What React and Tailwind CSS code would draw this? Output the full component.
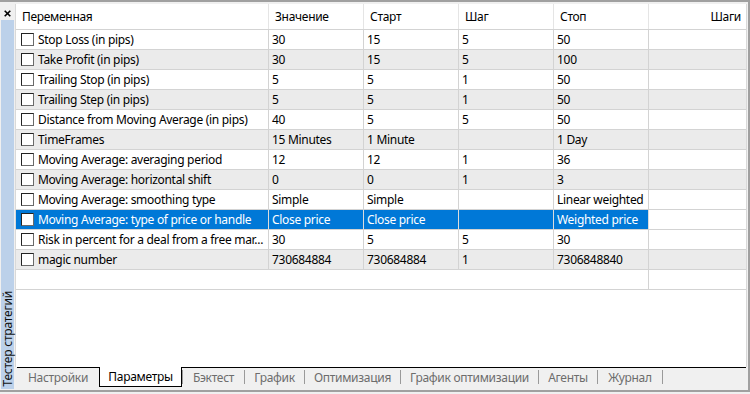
import React from "react";

const rows = [
  ["Stop Loss (in pips)", "30", "15", "5", "50"],
  ["Take Profit (in pips)", "30", "15", "5", "100"],
  ["Trailing Stop (in pips)", "5", "5", "1", "50"],
  ["Trailing Step (in pips)", "5", "5", "1", "50"],
  ["Distance from Moving Average (in pips)", "40", "5", "5", "50"],
  ["TimeFrames", "15 Minutes", "1 Minute", "", "1 Day"],
  ["Moving Average: averaging period", "12", "12", "1", "36"],
  ["Moving Average: horizontal shift", "0", "0", "1", "3"],
  ["Moving Average: smoothing type", "Simple", "Simple", "", "Linear weighted"],
  ["Moving Average: type of price or handle", "Close price", "Close price", "", "Weighted price"],
  ["Risk in percent for a deal from a free mar...", "30", "5", "5", "30"],
  ["magic number", "730684884", "730684884", "1", "7306848840"],
];

function Checkbox() {
  return (
    <span className="w-[13px] h-[13px] shrink-0 bg-white border border-[#222] border-r-[#6a6a6a] border-b-[#6a6a6a]" />
  );
}

function Row({ r, i }) {
  const selected = i === 9;
  const gray = i % 2 === 1;
  const base = selected ? "bg-[#0078d7] text-white" : gray ? "bg-[#ebebeb] text-black" : "bg-white text-black";
  const sep = selected ? "border-[#dcdcdc]" : "border-[#d3d3d3]";
  return (
    <div className="flex h-[20px] border-b border-[#d3d3d3]">
      <div className={`w-[253px] shrink-0 flex items-center pl-[5px] gap-[4px] border-r ${sep} ${base} whitespace-nowrap overflow-hidden`}>
        <Checkbox />
        <span>{r[0]}</span>
      </div>
      {[1, 2, 3, 4].map((k) => (
        <div key={k} className={`w-[95px] shrink-0 flex items-center pl-[3px] border-r ${sep} ${base} whitespace-nowrap overflow-hidden`}>
          {r[k]}
        </div>
      ))}
      <div className={`flex-1 ${gray && !selected ? "bg-[#ebebeb]" : "bg-white"}`} />
    </div>
  );
}

const tabs = [
  { t: "Настройки", w: "w-[82px]" },
  { t: "Параметры", w: "w-[83px]", active: true },
  { t: "Бэктест", w: "w-[61px]", sep: true },
  { t: "График", w: "w-[59px]", sep: true },
  { t: "Оптимизация", w: "w-[95px]", sep: true },
  { t: "График оптимизации", w: "w-[137px]", sep: true },
  { t: "Агенты", w: "w-[58px]", sep: true },
  { t: "Журнал", w: "w-[64px]", sep: true },
];

export default function App() {
  return (
    <div className="w-[750px] h-[394px] bg-[#f0f0f0] flex flex-col font-['Noto_Sans',sans-serif] text-[12px] tracking-[-0.3px] leading-none overflow-hidden">
      <div className="h-[2px] bg-[#a0a0a0] shrink-0" />
      <div className="flex flex-1 min-h-0 pt-[2px] border-r-2 border-[#a0a0a0]">
        {/* sidebar */}
        <div className="w-[15px] shrink-0 flex flex-col">
          <div className="h-[16px] shrink-0 flex items-center pl-[4px] pt-[2px]">
            <svg width="7" height="7" viewBox="0 0 7 7">
              <path d="M0.7 0.7 L6.3 6.3 M6.3 0.7 L0.7 6.3" stroke="#000" strokeWidth="1.6" />
            </svg>
          </div>
          <div className="flex-1 ml-[1px] mr-[1px] mb-[1px] bg-[#bcd1ea] flex flex-col justify-end items-center pb-[2px]">
            <span className="[writing-mode:vertical-rl] rotate-180 text-[#111] whitespace-nowrap tracking-[-0.2px]">
              Тестер стратегий
            </span>
          </div>
        </div>
        {/* main */}
        <div className="flex-1 flex flex-col mr-[1px]">
          <div className="flex-1 mt-[0px] bg-white border-l border-[#a0a0a0] border-r border-[#d9d9d9] flex flex-col">
            {/* header */}
            <div className="flex h-[26px] shrink-0 border-b border-[#d3d3d3] text-black">
              <div className="w-[253px] shrink-0 flex items-center pl-[6px] border-r border-[#e5e5e5]">Переменная</div>
              <div className="w-[95px] shrink-0 flex items-center pl-[6px] border-r border-[#e5e5e5]">Значение</div>
              <div className="w-[95px] shrink-0 flex items-center pl-[6px] border-r border-[#e5e5e5]">Старт</div>
              <div className="w-[95px] shrink-0 flex items-center pl-[6px] border-r border-[#e5e5e5]">Шаг</div>
              <div className="w-[95px] shrink-0 flex items-center pl-[6px] border-r border-[#e5e5e5]">Стоп</div>
              <div className="flex-1 flex items-center justify-end pr-[5px]">Шаги</div>
            </div>
            {rows.map((r, i) => (
              <Row key={i} r={r} i={i} />
            ))}
            <div className="flex h-[20px] border-b border-[#d3d3d3]">
              <div className="w-[633px] shrink-0 border-r border-[#d3d3d3]" />
              <div className="flex-1" />
            </div>
          </div>
          {/* tabs */}
          <div className="h-[23px] shrink-0 ml-[2px] mr-[1px] border-t border-black flex items-start text-[#6d6d6d]">
            {tabs.map((tb) => (
              <React.Fragment key={tb.t}>
                {tb.sep && <span className="w-px h-[14px] mt-[2px] bg-[#9a9a9a] shrink-0" />}
                {tb.active ? (
                  <div className={`${tb.w} shrink-0 -mt-px h-[20px] bg-white border-x border-b border-black text-black flex items-center justify-center`}>
                    {tb.t}
                  </div>
                ) : (
                  <div className={`${tb.w} shrink-0 h-[19px] flex items-center justify-center`}>{tb.t}</div>
                )}
              </React.Fragment>
            ))}
            <span className="w-px h-[14px] mt-[2px] bg-[#9a9a9a] shrink-0" />
          </div>
        </div>
      </div>
      <div className="h-[2px] bg-[#a0a0a0] shrink-0" />
      <div className="h-[2px] bg-[#f0f0f0] shrink-0" />
    </div>
  );
}
